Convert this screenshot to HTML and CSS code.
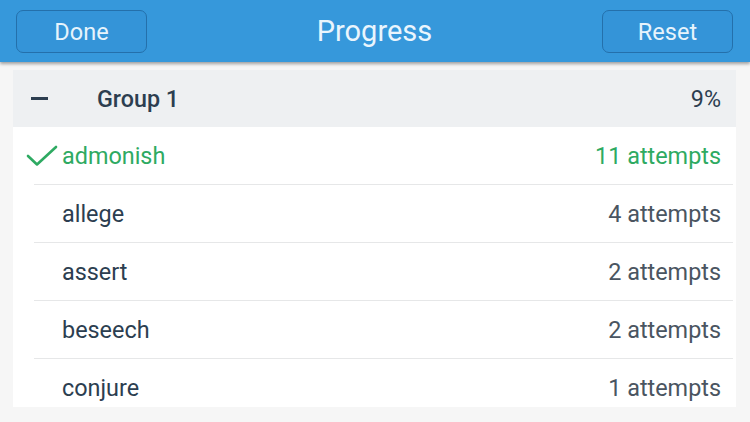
FILE: index.html
```html
<!DOCTYPE html>
<html>
<head>
  <title>Progress</title>
  <link rel="stylesheet" href="styles.css">
</head>
<body>
  <header class="topbar">
    <button class="bar-btn">Done</button>
    <h1 class="title">Progress</h1>
    <button class="bar-btn">Reset</button>
  </header>

  <div class="card">
    <div class="group-row">
      <span class="minus"></span>
      <span class="group-name">Group 1</span>
      <span class="group-pct">9%</span>
    </div>

    <div class="word-row done">
      <svg class="check" width="32" height="22" viewBox="0 0 32 22">
        <path d="M2 11 L11 19.5 L30 2" fill="none" stroke="#2eaa62" stroke-width="2.6" stroke-linecap="round" stroke-linejoin="round"/>
      </svg>
      <span class="word">admonish</span>
      <span class="count">11 attempts</span>
    </div>
    <div class="word-row">
      <span class="word">allege</span>
      <span class="count">4 attempts</span>
    </div>
    <div class="word-row">
      <span class="word">assert</span>
      <span class="count">2 attempts</span>
    </div>
    <div class="word-row">
      <span class="word">beseech</span>
      <span class="count">2 attempts</span>
    </div>
    <div class="word-row last">
      <span class="word">conjure</span>
      <span class="count">1 attempts</span>
    </div>
  </div>
</body>
</html>
```

FILE: styles.css
```css
body {
  margin: 0;
  background-color: #f6f6f6;
  font-family: Roboto, "Liberation Sans", sans-serif;
  height: 422px;
  overflow: hidden;
}

.topbar {
  height: 62px;
  background-color: #3698db;
  display: flex;
  align-items: flex-start;
  justify-content: space-between;
  padding: 10px 17px 0 16px;
  box-sizing: border-box;
  box-shadow: 0 2px 3px rgba(0, 0, 0, 0.35);
  position: relative;
}

.bar-btn {
  width: 131px;
  height: 43px;
  background-color: #3494d8;
  border: 1px solid #2470ab;
  border-radius: 7px;
  color: #e6f3fc;
  font-family: Roboto, "Liberation Sans", sans-serif;
  font-size: 23.5px;
  padding: 0;
}

.title {
  margin: 0;
  font-size: 29px;
  font-weight: normal;
  color: #eaf5fd;
  line-height: 43px;
  margin-top: 0;
}

.card {
  margin: 8px 14px 0 13px;
  background-color: #fff;
  height: 337px;
  overflow: hidden;
}

.group-row {
  height: 57px;
  background-color: #eef0f2;
  display: flex;
  align-items: center;
  padding: 0 15px 0 18px;
  color: #2c3e50;
  font-size: 23.3px;
}

.minus {
  width: 17px;
  height: 3px;
  background-color: #2c3e50;
  margin-right: 49px;
}

.group-name {
  font-weight: 500;
  flex: 1;
}

.word-row {
  height: 58px;
  display: flex;
  align-items: center;
  margin-left: 21px;
  margin-right: 3px;
  padding-left: 28px;
  padding-right: 12px;
  border-bottom: 1px solid #e6e7e8;
  box-sizing: border-box;
  font-size: 23.4px;
  color: #2c3e50;
  position: relative;
}

.word-row.last {
  border-bottom: none;
}

.word {
  flex: 1;
}

.count {
  color: #4a5561;
}

.word-row.done .word,
.word-row.done .count {
  color: #2eaa62;
}

.check {
  position: absolute;
  left: -8px;
  top: 18px;
}
```
